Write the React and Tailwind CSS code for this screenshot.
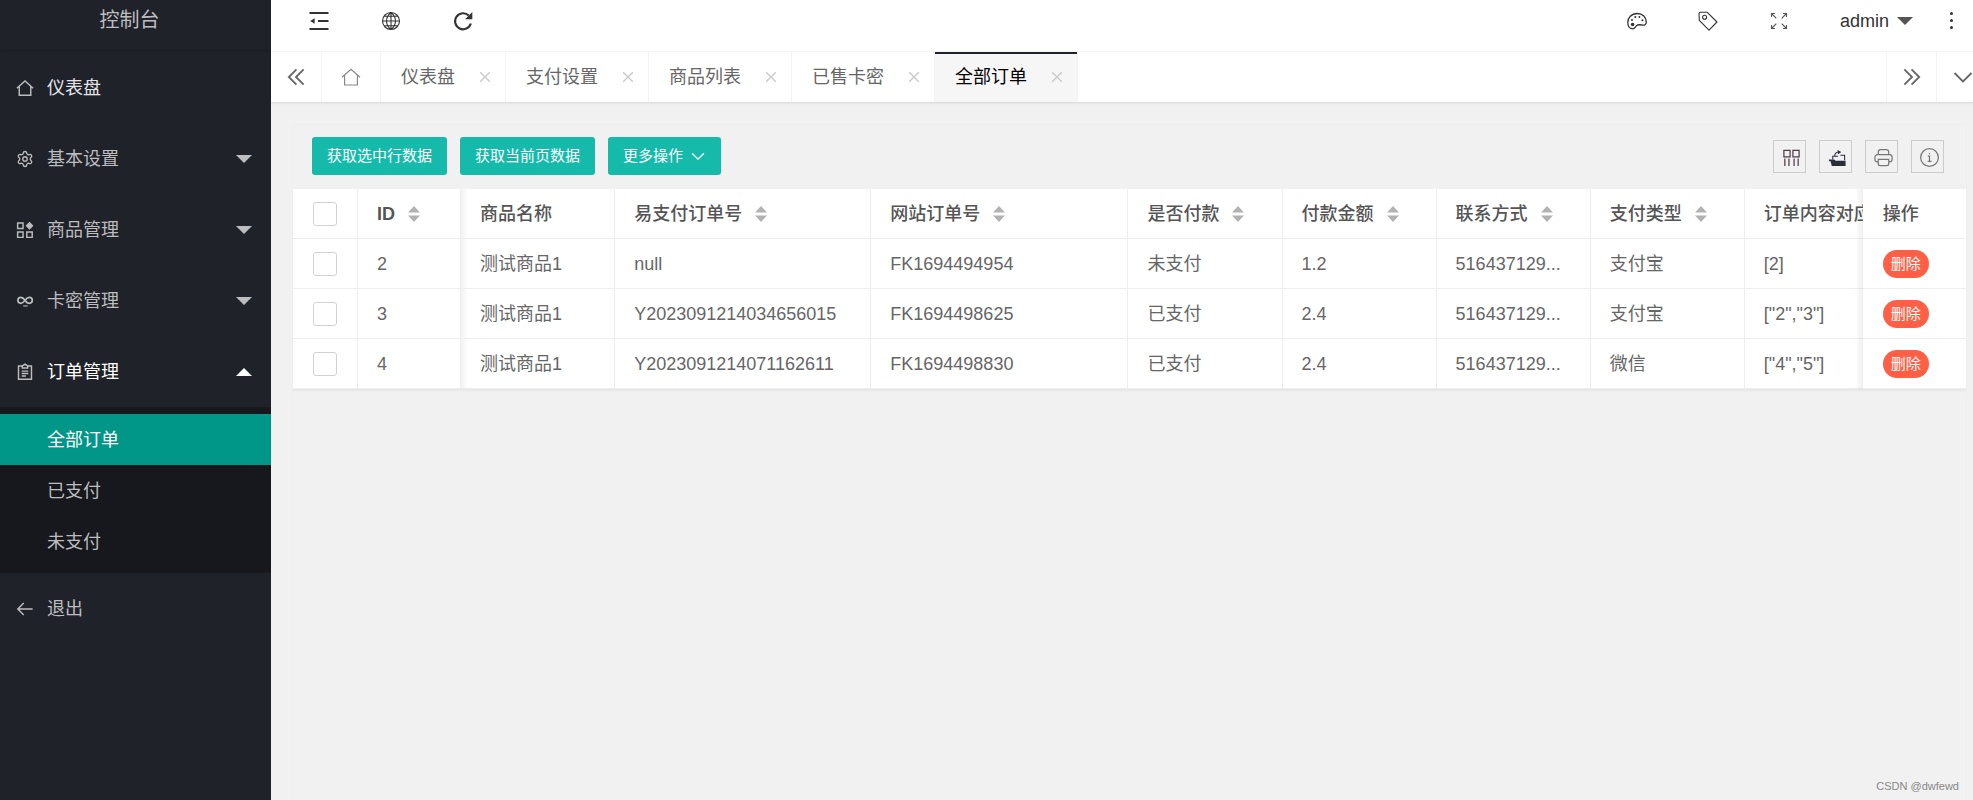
import { useState } from "react";
import { Settings } from "lucide-react";

const menu = [
  { name: "仪表盘", icon: "home", bright: true },
  { name: "基本设置", icon: "gear", children: [] },
  { name: "商品管理", icon: "blocks", children: [] },
  { name: "卡密管理", icon: "link", children: [] },
  {
    name: "订单管理",
    icon: "form",
    open: true,
    children: ["全部订单", "已支付", "未支付"],
  },
  { name: "退出", icon: "back" },
];

const tabs = ["仪表盘", "支付设置", "商品列表", "已售卡密", "全部订单"];

const columns = [
  { title: "商品名称", width: "w-[154px]" },
  { title: "易支付订单号", width: "w-[256px]", sort: true },
  { title: "网站订单号", width: "w-[257px]", sort: true },
  { title: "是否付款", width: "w-[154px]", sort: true },
  { title: "付款金额", width: "w-[154px]", sort: true },
  { title: "联系方式", width: "w-[154px]", sort: true },
  { title: "支付类型", width: "w-[154px]", sort: true },
  { title: "订单内容对应", width: "w-[193px]" },
];

const orders = [
  {
    id: 2,
    cells: ["测试商品1", "null", "FK1694494954", "未支付", "1.2", "516437129...", "支付宝", "[2]"],
  },
  {
    id: 3,
    cells: ["测试商品1", "Y2023091214034656015", "FK1694498625", "已支付", "2.4", "516437129...", "支付宝", '["2","3"]'],
  },
  {
    id: 4,
    cells: ["测试商品1", "Y2023091214071162611", "FK1694498830", "已支付", "2.4", "516437129...", "微信", '["4","5"]'],
  },
];

/* Iconos, todos en una caja de 20x20 */
const icons = {
  home: <path d="M1 10.2 10 2.2l9 8M3.6 8.4v9.6h12.8V8.4" />,
  blocks: (
    <>
      <path d="M1.8 2.3h6v6h-6zM1.8 12.2h6v6h-6zM12 12.2h6v6h-6z" />
      <path d="m15 .8 4.4 4.4L15 9.6l-4.4-4.4z" fill="currentColor" stroke="none" />
    </>
  ),
  link: (
    <>
      <path
        d="M10.2 9.5C8.5 7.2 7.2 6 5.4 6a3.2 3.2 0 0 0 0 6.6c2.3 0 3.2-1.600 4.800-3.600S12.800 6 14.800 6a3.200 3.200 0 0 1 0 6.600c-1.600 0-2.900-.9-4.200-2.500"
        strokeWidth="1.9"
      />
      <path d="M8 15.5h5" strokeWidth="1.2" />
    </>
  ),
  form: (
    <>
      <path d="M7 3.3H2.8V18h14.4V3.3H13" />
      <path d="M7 5.5V3.3l3-2.1 3 2.1v2.2zM6.3 9h7.4M6.3 11.7h7.4M6.3 14.4H11" />
    </>
  ),
  back: <path d="M18.5 10H2M8.6 3.3 2 10l6.600 6.700" />,
  fold: (
    <>
      <path d="M.5 2h19M9 10h10.5M.5 18h19" strokeWidth="2" />
      <path d="M1.2 10 5.6 7.3v5.4z" fill="currentColor" stroke="none" />
    </>
  ),
  globe: (
    <path d="M10 1.5a8.5 8.5 0 1 0 0 17 8.5 8.5 0 0 0 0-17zm0 0c-6 4.800-6 12.200 0 17m0-17c6 4.800 6 12.200 0 17m0-17v17M1.500 10h17M3.200 5.300h13.600M3.200 14.700h13.600" />
  ),
  refresh: (
    <>
      <path d="M17.8 12.5A8 8 0 1 1 15.7 4.5" strokeWidth="2.2" />
      <path d="M19.3 1v7.200h-7.200z" fill="currentColor" stroke="none" />
    </>
  ),
  palette: (
    <>
      <path d="M10.3 2.5C4.5 2.5.6 6.700.8 12c.1 3.500 2.300 5.800 4.900 5.800 2.200 0 2.300-1.600 3.600-2.900 1.700-1.600 3.600-1.300 5.400-.9 2.300.5 4.500.3 4.600-2.700.1-5-3.700-8.800-9-8.800z" />
      <g fill="currentColor" stroke="none">
        <circle cx="5.6" cy="13.5" r="1.8" />
        <circle cx="5" cy="9" r="1" />
        <circle cx="8.3" cy="6" r="1" />
        <circle cx="12.4" cy="6" r="1" />
        <circle cx="15.4" cy="9.3" r="1" />
      </g>
    </>
  ),
  tag: (
    <>
      <path d="M1 2.5 1.8 1.3 9 1.200l10 9.800-8 8.200L1.300 9.300z" strokeLinejoin="round" />
      <circle cx="6.6" cy="6.2" r="2" />
    </>
  ),
  full: (
    <>
      <path d="m3 3 4.3 4.3M17 3l-4.300 4.300M3 17l4.300-4.300M17 17l-4.300-4.300" />
      <path d="M2.5 6V2.5H6M14 2.5h3.5V6M2.5 14v3.5H6M14 17.5h3.5V14" />
    </>
  ),
  prev: <path d="M10.5 1.5 2 10l8.5 8.5M18.5 1.5 10 10l8.5 8.5" />,
  next: <path d="m1.5 1.5 8.500 8.500-8.500 8.500M9.500 1.500 18 10l-8.500 8.500" />,
  down: <path d="m1.5 6 8.5 8.500L18.500 6" />,
  close: <path d="m2 2 16 16M18 2 2 18" />,
  cols: (
    <path d="M2 2.5h6.5v6.800H2zM11.500 2.500H18v6.800h-6.500zM3 11v8M7.300 11v8M12.700 11v8M17 11v8" />
  ),
  exports: (
    <>
      <path d="M5 12V8.7h5.500M13 7.700h4.500V13M7 8.500c.3-2.600 1.600-4 4-4.200" strokeWidth="1.1" />
      <path d="m10 2 4 2.2-3.400 2.500z" fill="currentColor" stroke="none" />
      <path d="M1 12h5.500l1.500 1.300h10.500V19H4L2.700 14H1z" fill="currentColor" stroke="none" />
    </>
  ),
  printer: (
    <path d="M4.5 7V4.2A2.5 2.5 0 0 1 7 1.700h6a2.500 2.500 0 0 1 2.500 2.500V7M4.500 14.500h-1A2.500 2.500 0 0 1 1 12V9.500A2.500 2.500 0 0 1 3.500 7h13A2.500 2.500 0 0 1 19 9.500V12a2.500 2.500 0 0 1-2.500 2.500h-1M4.500 12h11v4.500a2 2 0 0 1-2 2h-7a2 2 0 0 1-2-2z" />
  ),
  info: (
    <>
      <circle cx="10" cy="10" r="9.3" />
      <path d="M8.3 8.5H10v5.300M8 14h4.200M9.400 5.800h1.200" />
    </>
  ),
};

function Icon({ name, className = "size-5", stroke = 1.3 }) {
  if (name === "gear") {
    return <Settings className={`shrink-0 ${className}`} strokeWidth={1.8} aria-hidden="true" />;
  }
  return (
    <svg
      viewBox="0 0 20 20"
      fill="none"
      stroke="currentColor"
      strokeWidth={stroke}
      className={`shrink-0 ${className}`}
      aria-hidden="true"
    >
      {icons[name]}
    </svg>
  );
}

function Caret({ up }) {
  return (
    <svg viewBox="0 0 16 8" className="h-2 w-4 shrink-0" fill="currentColor" aria-hidden="true">
      <path d={up ? "M0 8 8 0l8 8z" : "M0 0h16L8 8z"} />
    </svg>
  );
}

function SortIcon() {
  return (
    <svg viewBox="0 0 12 16" className="h-4 w-3 shrink-0" fill="#b2b2b2" aria-hidden="true">
      <path d="M0 6.5 6 0l6 6.500zM0 9.500h12L6 16z" />
    </svg>
  );
}

function Check({ label }) {
  return (
    <input
      type="checkbox"
      aria-label={label}
      className="block size-6 appearance-none rounded-[3px] border border-[#d2d2d2] bg-white checked:bg-[#16b777]"
    />
  );
}

function Sidebar() {
  const [current, setCurrent] = useState("全部订单");

  return (
    <aside className="w-[271px] shrink-0 bg-[#20222a] text-[#bcbdbf]">
      <div className="h-[52px] pb-[2px]">
        <div className="flex h-full items-start justify-center pr-3 pt-[6px] text-xl leading-7 shadow-[0_1px_2px_rgba(0,0,0,0.15)]">
          控制台
        </div>
      </div>
      <nav>
        {menu.map((item) => (
          <div key={item.name}>
            <a
              href="#"
              className={`flex h-[71px] items-center pl-4 pr-[19px] ${
                item.open ? "text-white" : item.bright ? "text-[#e4e4e6]" : ""
              }`}
            >
              <Icon name={item.icon} className="size-[18px] text-[#bcbdbf]" stroke={1.6} />
              <span className="ml-[13px] flex-1">{item.name}</span>
              {item.children && <Caret up={item.open} />}
            </a>
            {item.open && (
              <div className="bg-[#17181d] pb-[6px] pt-[7px]">
                {item.children.map((child) => (
                  <a
                    key={child}
                    href="#"
                    onClick={() => setCurrent(child)}
                    className={`flex h-[51px] items-center pl-[47px] ${
                      child === current ? "bg-[#009688] text-white" : ""
                    }`}
                  >
                    {child}
                  </a>
                ))}
              </div>
            )}
          </div>
        ))}
      </nav>
    </aside>
  );
}

function Header() {
  return (
    <header className="flex h-[51px] items-center justify-between pb-[10px] text-[#333]">
      <div className="flex items-center gap-[52px] pl-[38px]">
        <button type="button" aria-label="侧边伸缩"><Icon name="fold" className="block size-5" /></button>
        <button type="button" aria-label="前台"><Icon name="globe" className="block size-5" stroke={1.1} /></button>
        <button type="button" aria-label="刷新"><Icon name="refresh" className="block size-5" /></button>
      </div>
      <div className="flex items-center pr-[18px]">
        <div className="flex items-center gap-[51px] pr-[51px]">
          <button type="button" aria-label="主题"><Icon name="palette" className="block size-5" /></button>
          <button type="button" aria-label="便签"><Icon name="tag" className="block size-5" stroke={1.1} /></button>
          <button type="button" aria-label="全屏"><Icon name="full" className="block size-5 text-[#555]" stroke={1.1} /></button>
        </div>
        <button type="button" className="flex items-center gap-2">
          admin
          <span className="text-[#555]"><Caret /></span>
        </button>
        <button type="button" aria-label="更多" className="ml-[34px] flex w-2 flex-col items-center gap-1">
          <span className="size-[3px] rounded-full bg-[#333]"></span>
          <span className="size-[3px] rounded-full bg-[#333]"></span>
          <span className="size-[3px] rounded-full bg-[#333]"></span>
        </button>
      </div>
    </header>
  );
}

function TabBar() {
  const [active, setActive] = useState("全部订单");

  return (
    <div className="relative flex h-[51px] border-t border-[#f4f4f4] text-[#666] shadow-[0_1px_2px_rgba(0,0,0,0.12)]">
      <button type="button" aria-label="向左" className="flex w-[51px] items-center justify-center border-r border-[#f4f4f4]">
        <Icon name="prev" className="size-[18px]" stroke={2} />
      </button>
      <button type="button" aria-label="主页" className="flex w-[59px] items-center justify-center border-r border-[#f4f4f4] text-[#888]">
        <Icon name="home" className="size-5" stroke={1.2} />
      </button>
      <div className="flex min-w-0 flex-1 overflow-hidden">
        {tabs.map((tab) => (
          <div
            key={tab}
            className={`flex items-center border-r border-[#f4f4f4] pl-5 pr-[14px] ${
              tab === active ? "bg-[#f6f6f6] text-black shadow-[inset_0_2px_0_#20222a]" : ""
            }`}
          >
            <button type="button" className="whitespace-nowrap" onClick={() => setActive(tab)}>
              {tab}
            </button>
            <button type="button" aria-label={`关闭${tab}`} className="ml-6 text-[#c8c8c8]">
              <Icon name="close" className="block size-3" stroke={2.2} />
            </button>
          </div>
        ))}
      </div>
      <button type="button" aria-label="向右" className="flex w-[51px] items-center justify-center border-x border-[#f4f4f4]">
        <Icon name="next" className="size-[18px]" stroke={2} />
      </button>
      <button type="button" aria-label="标签操作" className="flex w-9 items-center justify-end">
        <Icon name="down" className="size-5" stroke={1.8} />
      </button>
    </div>
  );
}

function Toolbar() {
  const btn =
    "flex h-[38px] items-center rounded-[3px] bg-[#16baaa] px-[15px] text-[15px] text-white";

  return (
    <div className="flex h-[64px] items-start justify-between pl-[19px] pr-[22px] pt-3">
      <div className="flex gap-[13px]">
        <button type="button" className={btn}>获取选中行数据</button>
        <button type="button" className={btn}>获取当前页数据</button>
        <button type="button" className={btn}>
          更多操作
          <Icon name="down" className="ml-2 mr-px size-[14px]" stroke={1.8} />
        </button>
      </div>
      <div className="flex gap-[13px] pt-[3px] text-[#333]">
        {[
          ["cols", "筛选列", "text-[#4d3c48]"],
          ["exports", "导出", "text-[#2b2d38]"],
          ["printer", "打印", "text-[#777]"],
          ["info", "提示", "text-[#777]"],
        ].map(([icon, label, color]) => (
          <button
            key={icon}
            type="button"
            aria-label={label}
            className={`flex size-[33px] items-center justify-center border border-[#ccc] pl-[3px] pt-[2px] ${color}`}
          >
            <Icon name={icon} className="size-[19px]" />
          </button>
        ))}
      </div>
    </div>
  );
}

function OrderTable() {
  const cell = "h-[50px] overflow-hidden border-b border-r border-[#eee] bg-white p-0";
  const text = "truncate px-[19px]";
  // sombra de las columnas fijas
  const afterFixed = "bg-[linear-gradient(to_right,#f2f2f2,#fff_7px)]";
  const fixedRight =
    "sticky right-0 h-[50px] border-b border-[#eee] bg-white p-0 pl-5 before:absolute before:-bottom-px before:-left-2 before:top-0 before:w-2 before:bg-linear-to-r before:from-transparent before:to-black/6";

  return (
    <div className="overflow-hidden pb-2">
      <table className="w-[1748px] min-w-full table-fixed border-separate border-spacing-0 text-left text-[#666] shadow-[0_1px_3px_rgba(0,0,0,0.08)]">
        <thead className="text-[#555]">
          <tr>
            <th className={`${cell} w-[65px] pl-5`}><Check label="全选" /></th>
            <th className={`${cell} w-[103px] font-bold`}>
              <div className="flex items-center gap-[13px] px-[19px]">ID <SortIcon /></div>
            </th>
            {columns.map((col, i) => (
              <th
                key={col.title}
                className={`${cell} ${col.width} font-medium ${i === 0 ? afterFixed : ""}`}
              >
                <div className="flex items-center gap-[13px] whitespace-nowrap px-[19px]">
                  {col.title}
                  {col.sort && <SortIcon />}
                </div>
              </th>
            ))}
            <th className={`${fixedRight} w-[103px] font-medium`}>操作</th>
          </tr>
        </thead>
        <tbody>
          {orders.map((order) => (
            <tr key={order.id}>
              <td className={`${cell} pl-5`}><Check label={`选择订单${order.id}`} /></td>
              <td className={cell}><div className={text}>{order.id}</div></td>
              {order.cells.map((value, i) => (
                <td key={i} className={`${cell} ${i === 0 ? afterFixed : ""}`}>
                  <div className={text}>{value}</div>
                </td>
              ))}
              <td className={fixedRight}>
                <button type="button" className="block h-7 rounded-full bg-[#ff5f45] px-2 text-[15px] leading-7 text-white">
                  删除
                </button>
              </td>
            </tr>
          ))}
        </tbody>
      </table>
    </div>
  );
}

function App() {
  return (
    <div className="relative flex min-h-screen bg-[#f1f1f1] font-['Liberation_Sans','Noto_Sans_CJK_SC',sans-serif] text-lg leading-6">
      <Sidebar />
      <div className="flex min-w-0 flex-1 flex-col">
        <div className="bg-white">
          <Header />
          <TabBar />
        </div>
        <main className="flex flex-1 flex-col pl-[21px] pr-[6px] pt-[22px]">
          <div className="flex-1 border-x border-t border-[#eee]">
            <Toolbar />
            <OrderTable />
          </div>
        </main>
      </div>
      <span className="absolute bottom-[6px] right-[14px] text-[11px] leading-4 text-[#888]">
        CSDN @dwfewd
      </span>
    </div>
  );
}

export default App;
